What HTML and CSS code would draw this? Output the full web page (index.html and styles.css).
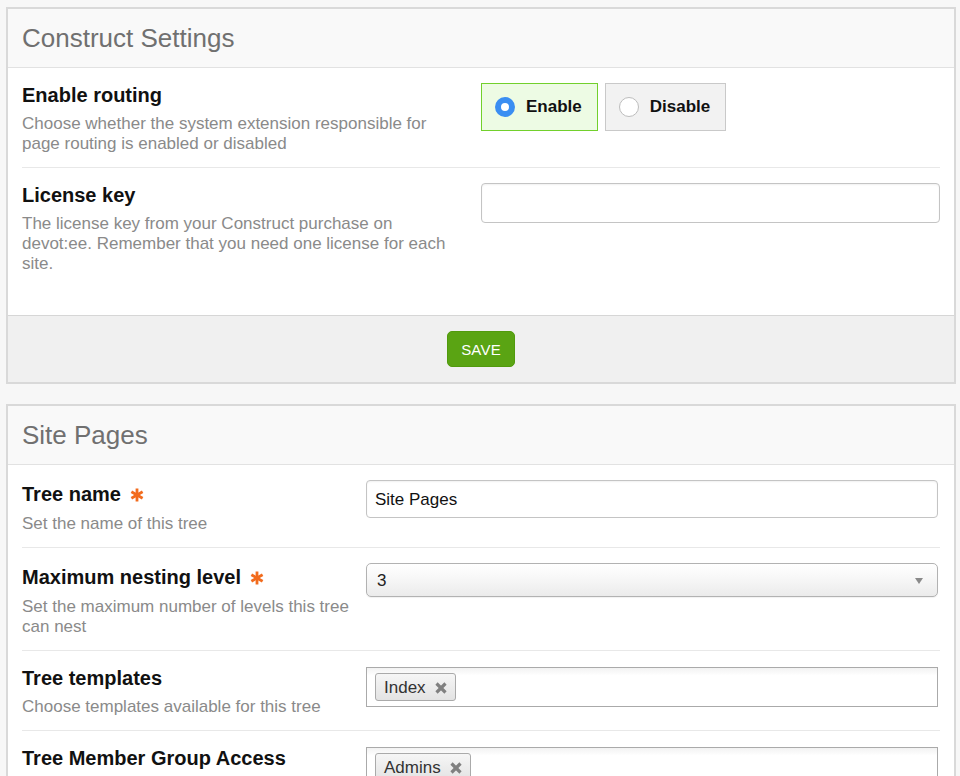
FILE: index.html
```html
<!DOCTYPE html>
<html lang="en">
<head>
<meta charset="utf-8">
<title>Construct Settings</title>
<link rel="stylesheet" href="styles.css">
</head>
<body>
<div class="page">
  <section class="panel panel-settings">
    <h2 class="panel-title">Construct Settings</h2>
    <div class="panel-body">
      <div class="row">
        <div class="field-info">
          <h3 class="label">Enable routing</h3>
          <p class="desc">Choose whether the system extension responsible for page routing is enabled or disabled</p>
        </div>
        <div class="field">
          <div class="radios">
            <label class="radio-box is-checked"><span class="radio-dot"></span>Enable</label>
            <label class="radio-box"><span class="radio-dot"></span>Disable</label>
          </div>
        </div>
      </div>
      <div class="row row-last">
        <div class="field-info">
          <h3 class="label">License key</h3>
          <p class="desc">The license key from your Construct purchase on devot:ee. Remember that you need one license for each site.</p>
        </div>
        <div class="field">
          <div class="text-input"></div>
        </div>
      </div>
    </div>
    <div class="panel-footer">
      <button class="btn-save" type="button">SAVE</button>
    </div>
  </section>

  <section class="panel panel-pages">
    <h2 class="panel-title">Site Pages</h2>
    <div class="panel-body">
      <div class="row">
        <div class="field-info">
          <h3 class="label label-req">Tree name <svg class="req" viewBox="0 0 14 14" width="14" height="14"><g stroke="#f26b1d" stroke-width="2.8" stroke-linecap="butt"><line x1="7" y1="0.5" x2="7" y2="13.5"/><line x1="1.4" y1="3.75" x2="12.6" y2="10.25"/><line x1="1.4" y1="10.25" x2="12.6" y2="3.75"/></g></svg></h3>
          <p class="desc desc-req">Set the name of this tree</p>
        </div>
        <div class="field">
          <div class="text-input text-input-sm">Site Pages</div>
        </div>
      </div>
      <div class="row">
        <div class="field-info">
          <h3 class="label label-req">Maximum nesting level <svg class="req" viewBox="0 0 14 14" width="14" height="14"><g stroke="#f26b1d" stroke-width="2.8" stroke-linecap="butt"><line x1="7" y1="0.5" x2="7" y2="13.5"/><line x1="1.4" y1="3.75" x2="12.6" y2="10.25"/><line x1="1.4" y1="10.25" x2="12.6" y2="3.75"/></g></svg></h3>
          <p class="desc desc-req">Set the maximum number of levels this tree can nest</p>
        </div>
        <div class="field">
          <div class="select"><span>3</span><span class="select-arrow"></span></div>
        </div>
      </div>
      <div class="row">
        <div class="field-info">
          <h3 class="label">Tree templates</h3>
          <p class="desc">Choose templates available for this tree</p>
        </div>
        <div class="field">
          <div class="multi">
            <span class="tag">Index<svg class="tag-x" viewBox="0 0 12 12" width="12" height="12"><g stroke="#808080" stroke-width="3.2"><line x1="1.5" y1="1.5" x2="10.5" y2="10.5"/><line x1="10.5" y1="1.5" x2="1.5" y2="10.5"/></g></svg></span>
          </div>
        </div>
      </div>
      <div class="row">
        <div class="field-info">
          <h3 class="label">Tree Member Group Access</h3>
        </div>
        <div class="field">
          <div class="multi">
            <span class="tag">Admins<svg class="tag-x" viewBox="0 0 12 12" width="12" height="12"><g stroke="#808080" stroke-width="3.2"><line x1="1.5" y1="1.5" x2="10.5" y2="10.5"/><line x1="10.5" y1="1.5" x2="1.5" y2="10.5"/></g></svg></span>
          </div>
        </div>
      </div>
    </div>
  </section>
</div>
</body>
</html>
```

FILE: styles.css
```css
* { box-sizing: border-box; }

html, body {
  margin: 0;
  padding: 0;
  background: #f7f7f7;
  font-family: "Liberation Sans", Arial, Helvetica, sans-serif;
  color: #111;
}

.page {
  padding: 7px 4px 0 6px;
}

.panel {
  background: #fff;
  border: 2px solid #d9d9d9;
  margin-bottom: 20px;
}

.panel-title {
  margin: 0;
  height: 59px;
  line-height: 58px;
  padding: 0 14px;
  font-size: 26px;
  font-weight: normal;
  color: #707070;
  background: #f9f9f9;
  border-bottom: 1px solid #e2e2e2;
}

.panel-body {
  padding: 0 14px;
}

.panel-settings .panel-body {
  padding-bottom: 28px;
}

.row {
  display: grid;
  grid-template-columns: 459px 1fr;
  padding: 15px 0 13px;
  border-bottom: 1px solid #e8e8e8;
}

.row-last {
  border-bottom: 0;
}

.panel-pages .row {
  grid-template-columns: 344px 1fr;
}

.panel-pages .field-info {
  padding-right: 4px;
}

.panel-settings .field-info {
  padding-right: 24px;
}

.panel-pages .field {
  margin-right: 2px;
}

.label {
  margin: 0;
  padding-top: 1px;
  font-size: 20px;
  line-height: 22px;
  font-weight: bold;
  color: #111;
}

.label-req {
  padding-top: 0;
  line-height: 28px;
}

.req {
  vertical-align: -1px;
  margin-left: 3px;
}

.desc {
  margin: 8px 0 0;
  font-size: 17px;
  line-height: 20px;
  color: #8a8a8a;
}

.desc-req {
  margin-top: 6px;
}

/* radios */
.radios {
  display: flex;
  gap: 7px;
}

.radio-box {
  display: flex;
  align-items: center;
  height: 48px;
  padding: 0 15px 0 13px;
  border: 1px solid #c9c9c9;
  background: #f2f2f2;
  font-size: 17px;
  font-weight: bold;
  color: #111;
}

.radio-box.is-checked {
  border-color: #72d02c;
  background: #edfbe4;
}

.radio-dot {
  width: 20px;
  height: 20px;
  border-radius: 50%;
  border: 1px solid #bdbdbd;
  background: #fff;
  margin-right: 11px;
  flex: none;
}

.is-checked .radio-dot {
  border: 6px solid #3a8ef2;
  background: #fff;
}

/* inputs */
.text-input {
  height: 40px;
  border: 1px solid #c4c4c4;
  border-radius: 4px;
  background: #fff;
  box-shadow: inset 0 1px 2px rgba(0, 0, 0, 0.06);
  padding: 0 8px;
  font-size: 17px;
  line-height: 37px;
  color: #111;
}

.text-input-sm {
  height: 38px;
}

.select {
  display: flex;
  align-items: center;
  justify-content: space-between;
  height: 34px;
  padding: 1px 14px 0 10px;
  border: 1px solid #b2b2b2;
  border-radius: 5px;
  background: linear-gradient(#ffffff 0%, #f7f7f7 45%, #ebebeb 100%);
  box-shadow: 0 1px 1px rgba(0, 0, 0, 0.06);
  font-size: 17px;
  color: #222;
}

.select-arrow {
  width: 0;
  height: 0;
  border-left: 4px solid transparent;
  border-right: 4px solid transparent;
  border-top: 6px solid #8a8a8a;
}

.multi {
  display: flex;
  align-items: flex-start;
  height: 40px;
  margin-top: 1px;
  padding: 5px 8px;
  border: 1px solid #aaa;
  background: linear-gradient(#f2f2f2 0%, #ffffff 20%);
}

.tag {
  display: inline-flex;
  align-items: center;
  height: 28px;
  padding: 1px 8px 0;
  border: 1px solid #aaa;
  border-radius: 3px;
  background: linear-gradient(#f6f6f6 0%, #e3e3e3 100%);
  font-size: 17px;
  color: #333;
}

.tag-x {
  margin-left: 9px;
}

/* footer */
.panel-footer {
  display: flex;
  justify-content: center;
  padding: 15px 0;
  background: #f0f0f0;
  border-top: 1px solid #d6d6d6;
}

.btn-save {
  height: 36px;
  padding: 0 13px;
  border: 1px solid #519a0d;
  border-radius: 5px;
  background: #5aa413;
  color: #fff;
  font-family: "Liberation Sans", Arial, Helvetica, sans-serif;
  font-size: 15px;
  letter-spacing: 0.2px;
}
```
